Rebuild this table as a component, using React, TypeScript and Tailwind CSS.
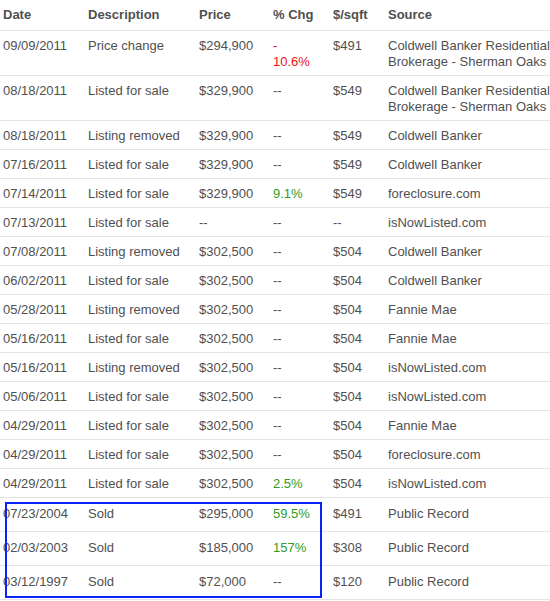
import React from 'react';

type Row = {
  date: string;
  desc: string;
  price: string;
  chg: React.ReactNode;
  sqft: string;
  source: string;
  sold?: boolean;
};

const Red = ({ children }: { children: React.ReactNode }) => (
  <span className="text-[#f01010]">{children}</span>
);
const Green = ({ children }: { children: React.ReactNode }) => (
  <span className="text-[#2f9b1f]">{children}</span>
);

const ROWS: Row[] = [
  { date: '09/09/2011', desc: 'Price change', price: '$294,900', chg: <Red>-<br />10.6%</Red>, sqft: '$491', source: 'Coldwell Banker Residential Brokerage - Sherman Oaks' },
  { date: '08/18/2011', desc: 'Listed for sale', price: '$329,900', chg: '--', sqft: '$549', source: 'Coldwell Banker Residential Brokerage - Sherman Oaks' },
  { date: '08/18/2011', desc: 'Listing removed', price: '$329,900', chg: '--', sqft: '$549', source: 'Coldwell Banker' },
  { date: '07/16/2011', desc: 'Listed for sale', price: '$329,900', chg: '--', sqft: '$549', source: 'Coldwell Banker' },
  { date: '07/14/2011', desc: 'Listed for sale', price: '$329,900', chg: <Green>9.1%</Green>, sqft: '$549', source: 'foreclosure.com' },
  { date: '07/13/2011', desc: 'Listed for sale', price: '--', chg: '--', sqft: '--', source: 'isNowListed.com' },
  { date: '07/08/2011', desc: 'Listing removed', price: '$302,500', chg: '--', sqft: '$504', source: 'Coldwell Banker' },
  { date: '06/02/2011', desc: 'Listed for sale', price: '$302,500', chg: '--', sqft: '$504', source: 'Coldwell Banker' },
  { date: '05/28/2011', desc: 'Listing removed', price: '$302,500', chg: '--', sqft: '$504', source: 'Fannie Mae' },
  { date: '05/16/2011', desc: 'Listed for sale', price: '$302,500', chg: '--', sqft: '$504', source: 'Fannie Mae' },
  { date: '05/16/2011', desc: 'Listing removed', price: '$302,500', chg: '--', sqft: '$504', source: 'isNowListed.com' },
  { date: '05/06/2011', desc: 'Listed for sale', price: '$302,500', chg: '--', sqft: '$504', source: 'isNowListed.com' },
  { date: '04/29/2011', desc: 'Listed for sale', price: '$302,500', chg: '--', sqft: '$504', source: 'Fannie Mae' },
  { date: '04/29/2011', desc: 'Listed for sale', price: '$302,500', chg: '--', sqft: '$504', source: 'foreclosure.com' },
  { date: '04/29/2011', desc: 'Listed for sale', price: '$302,500', chg: <Green>2.5%</Green>, sqft: '$504', source: 'isNowListed.com' },
  { date: '07/23/2004', desc: 'Sold', price: '$295,000', chg: <Green>59.5%</Green>, sqft: '$491', source: 'Public Record', sold: true },
  { date: '02/03/2003', desc: 'Sold', price: '$185,000', chg: <Green>157%</Green>, sqft: '$308', source: 'Public Record', sold: true },
  { date: '03/12/1997', desc: 'Sold', price: '$72,000', chg: '--', sqft: '$120', source: 'Public Record', sold: true },
];

const HEADERS = ['Date', 'Description', 'Price', '% Chg', '$/sqft', 'Source'];

export default function App() {
  return (
    <div className="relative h-[601px] w-[550px] overflow-hidden bg-white font-['Liberation_Sans',Arial,sans-serif] text-[13px] leading-4 text-[#505050]">
      <table className="w-[560px] table-fixed border-collapse">
        <colgroup>
          <col className="w-[85px]" />
          <col className="w-[111px]" />
          <col className="w-[74px]" />
          <col className="w-[60px]" />
          <col className="w-[55px]" />
          <col className="w-[175px]" />
        </colgroup>
        <thead>
          <tr className="border-b border-[#e4e4e4]">
            {HEADERS.map((h) => (
              <th key={h} className="pb-[7px] pl-[3px] pt-[7px] text-left align-top font-bold">
                {h}
              </th>
            ))}
          </tr>
        </thead>
        <tbody>
          {ROWS.map((r, i) => {
            const cell = r.sold ? 'pl-[3px] pt-[8px] pb-[9px] align-top' : 'pl-[3px] pt-[7px] pb-[5px] align-top';
            return (
              <tr key={i} className="border-b border-[#e4e4e4]">
                <td className={cell}>{r.date}</td>
                <td className={cell}>{r.desc}</td>
                <td className={cell}>{r.price}</td>
                <td className={cell}>{r.chg}</td>
                <td className={cell}>{r.sqft}</td>
                <td className={cell + ' pr-[10px]'}>{r.source}</td>
              </tr>
            );
          })}
        </tbody>
      </table>

      {/* highlight around the public-record sales */}
      <div className="pointer-events-none absolute left-[5px] top-[502px] h-[96px] w-[317px] border-2 border-[#0a22f5]" />
    </div>
  );
}
